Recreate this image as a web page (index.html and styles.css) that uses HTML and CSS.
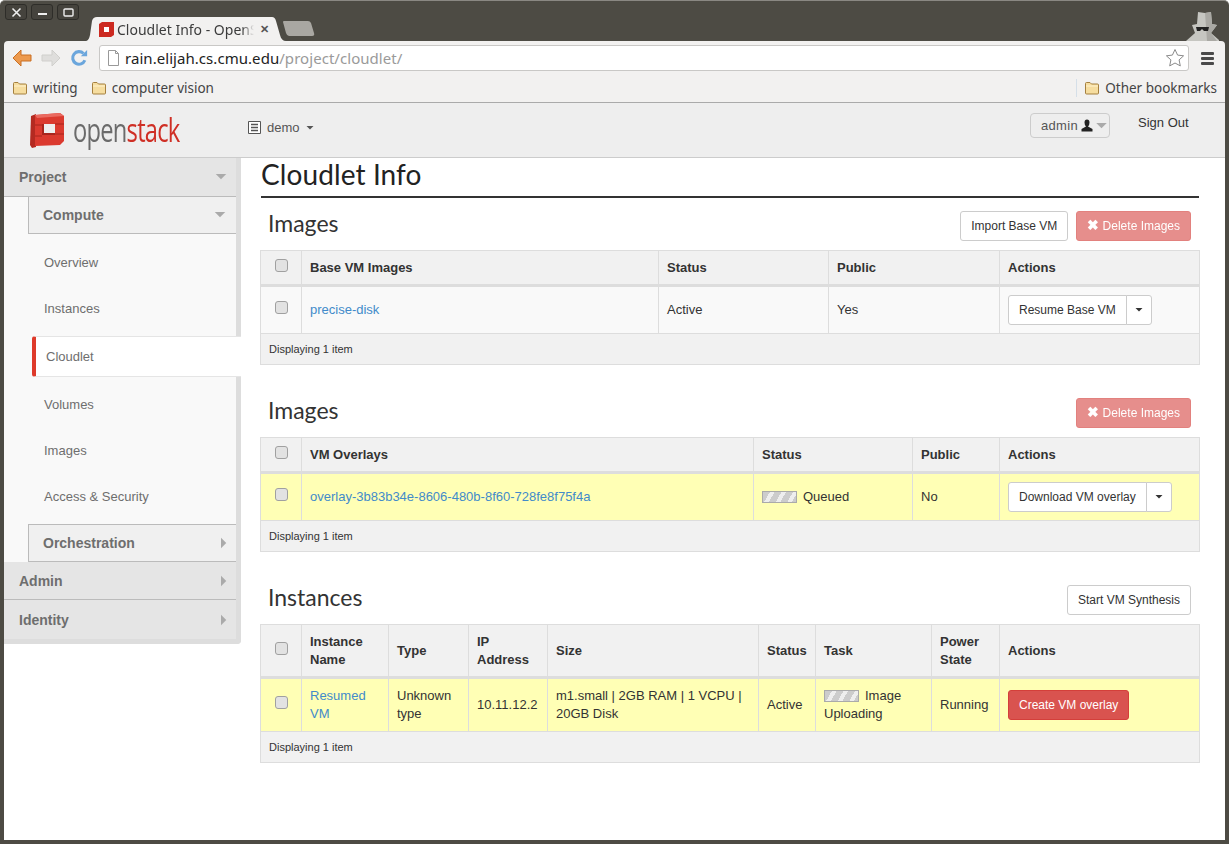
FILE: index.html
```html
<!DOCTYPE html>
<html>
<head>
    <title>Cloudlet Info - OpenStack Dashboard</title>
    <link rel="stylesheet" href="styles.css">
</head>

<body>
<svg class="defs" width="0" height="0">
    <symbol id="folder" viewBox="0 0 16 16">
        <path d="M1.500 13V3.500q0-1 1-1h3.500l1.500 1.500h6q1 0 1 1V13q0 1-1 1h-11q-1 0-1-1z" fill="#f6dd9f" stroke="#a5803f"/>
        <path d="M2 6h12" stroke="#fff3cf"/>
    </symbol>
    <symbol id="caret-down" viewBox="0 0 14 8"><path d="M0 0h14L7 7z"/></symbol>
    <symbol id="caret-right" viewBox="0 0 8 14"><path d="M0 0v14l7-7z"/></symbol>
</svg>

<div class="window">
    <div class="titlebar">
        <div class="win-buttons">
            <span class="win-btn"><svg width="11" height="11" viewBox="0 0 11 11"><path d="M1.500 1.500l8 8M9.500 1.500l-8 8" stroke="#eee" stroke-width="1.600"/></svg></span>
            <span class="win-btn"><svg width="11" height="11" viewBox="0 0 11 11"><path d="M1 7h9" stroke="#eee" stroke-width="2"/></svg></span>
            <span class="win-btn"><svg width="11" height="11" viewBox="0 0 11 11"><rect x="1" y="2" width="9" height="7" rx="1" fill="none" stroke="#eee" stroke-width="1.400"/></svg></span>
        </div>
        <div class="tabs">
            <div class="tab">
                <svg class="tab-shape" width="201" height="24" viewBox="0 0 201 24"><path d="M0 24c3 0 4-2 5-6l2-14q1-4 5-4h175q3 0 4 4l4 14c1 4 3 6 6 6z" fill="#f2f1f0"/></svg>
                <svg class="tab-icon" width="15" height="15" viewBox="0 0 15 15"><path d="M0 2l3-2h12v13l-3 2H0z" fill="#cc2a21"/><rect x="5" y="5" width="5" height="5" fill="#fff"/></svg>
                <span class="tab-title">Cloudlet Info - OpenS</span>
                <span class="tab-close">&#10005;</span>
            </div>
            <svg class="new-tab" width="32" height="15" viewBox="0 0 32 15"><path d="M0 1q0-1 1-1h24q2 0 3 2l3 10q1 3-2 3H6q-2 0-3-3z" fill="#a9a7a2"/></svg>
        </div>
        <svg class="incognito" width="34" height="30" viewBox="0 0 34 30">
            <path d="M7 14l5-1 1-12 7 1 6-1 1 12 5 1-6 8 9 8H1l9-8z" fill="#c6c6c1"/>
            <path d="M20 2l6-1 1 12 5 1-6 8 6 8H22z" fill="#aaa9a4"/>
            <path d="M11 16h13l-1 4h-4l-2-2-2 2h-3z" fill="#222"/>
        </svg>
    </div>

    <div class="toolbar">
        <svg class="nav-icon" width="20" height="18" viewBox="0 0 20 18"><path d="M9 1L1 9l8 8v-5h10V6H9z" fill="#ed9a4e" stroke="#c96f23"/></svg>
        <svg class="nav-icon" width="20" height="18" viewBox="0 0 20 18"><path d="M11 1l8 8-8 8v-5H1V6h10z" fill="#dfdedc" stroke="#d0cfcc"/></svg>
        <svg class="nav-icon" width="18" height="20" viewBox="0 0 20 20"><path d="M16.500 12.500a7 7 0 1 1-1.500-7.500" fill="none" stroke="#6ba6dc" stroke-width="3.400"/><path d="M12 8h7V1z" fill="#6ba6dc"/></svg>
        <div class="urlbar">
            <svg width="13" height="16" viewBox="0 0 13 16"><path d="M1.500.5h7l3 3v12h-10z" fill="#fff" stroke="#999"/><path d="M8.500.5v3h3" fill="none" stroke="#999"/></svg>
            <span class="url-host">rain.elijah.cs.cmu.edu<span class="url-path">/project/cloudlet/</span></span>
            <svg class="star" width="20" height="20" viewBox="0 0 20 20"><path d="M10 1.500l2.600 5.600 6 .7-4.500 4.100 1.200 6L10 15l-5.300 2.900 1.200-6L1.400 7.800l6-.7z" fill="#fff" stroke="#8a8a8a"/></svg>
        </div>
        <div class="menu-icon"><i></i><i></i><i></i></div>
    </div>

    <div class="bookmarks">
        <a class="bookmark"><svg width="16" height="16"><use href="#folder"/></svg>writing</a>
        <a class="bookmark"><svg width="16" height="16"><use href="#folder"/></svg>computer vision</a>
        <a class="bookmark other"><svg width="16" height="16"><use href="#folder"/></svg>Other bookmarks</a>
    </div>

    <div class="topbar">
        <div class="brand">
            <svg width="38" height="36" viewBox="0 0 38 36">
                <path d="M4 4l5-2v33l-4 1-2-3z" fill="#b42a21"/>
                <path d="M8 3l25-2 4 3v25l-4 4-25 1z" fill="#db3a2f"/>
                <path d="M8 3l25-2 4 3-27 2z" fill="#ea6a60"/>
                <rect x="15" y="12" width="13" height="11" fill="#eee"/>
                <path d="M15 12v11h13v-2H17V12z" fill="#a8251d"/>
                <path d="M8 13h7M8 24h7M28 12h9M28 22h9" stroke="#a8251d"/>
            </svg>
            <span class="brand-name">open<b>stack</b></span>
        </div>
        <div class="project-pick">
            <svg width="13" height="13" viewBox="0 0 13 13"><path d="M.5.5h12v12H.5z" fill="#fff" stroke="#555"/><path d="M3 3.500h7M3 6.500h7M3 9.500h7" stroke="#555" stroke-width="1.500"/></svg>
            <span>demo</span>
            <svg class="pick-caret" width="8" height="4"><use href="#caret-down"/></svg>
        </div>
        <div class="user-btn">admin
            <svg width="12" height="13" viewBox="0 0 12 13"><path d="M3.500 3.500a2.500 3 0 0 1 5 0q0 2.500-1.500 4l4.500 2.500v2.500H.5V10L5 7.500q-1.500-1.500-1.500-4z" fill="#222"/></svg>
            <svg class="user-caret" width="11" height="6"><use href="#caret-down"/></svg>
        </div>
        <a class="sign-out">Sign Out</a>
    </div>

    <div class="page">
        <div class="sidebar">
            <div class="nav-head">Project<svg class="arrow" width="12" height="6"><use href="#caret-down"/></svg></div>
            <div class="nav-group">
                <div class="nav-sub">Compute<svg class="arrow" width="12" height="6"><use href="#caret-down"/></svg></div>
                <ul class="nav-list">
                    <li>Overview</li>
                    <li>Instances</li>
                    <li class="active">Cloudlet</li>
                    <li>Volumes</li>
                    <li>Images</li>
                    <li>Access &amp; Security</li>
                </ul>
                <div class="nav-sub closed">Orchestration<svg class="arrow" width="6" height="12"><use href="#caret-right"/></svg></div>
            </div>
            <div class="nav-head closed">Admin<svg class="arrow" width="6" height="12"><use href="#caret-right"/></svg></div>
            <div class="nav-head closed">Identity<svg class="arrow" width="6" height="12"><use href="#caret-right"/></svg></div>
        </div>

        <div class="main">
            <h1 class="page-title">Cloudlet Info</h1>

            <div class="section">
                <div class="section-head">
                    <h2>Images</h2>
                    <div class="section-actions">
                        <a class="btn">Import Base VM</a>
                        <a class="btn btn-danger disabled"><b>&#10006;</b> Delete Images</a>
                    </div>
                </div>
                <table class="data">
                    <colgroup><col class="c-check"><col class="c-w357"><col class="c-w170"><col class="c-w171"><col></colgroup>
                    <thead><tr><th class="check"><span class="checkbox"></span></th><th>Base VM Images</th><th>Status</th><th>Public</th><th>Actions</th></tr></thead>
                    <tbody><tr class="plain">
                        <td class="check"><span class="checkbox"></span></td>
                        <td><a class="link">precise-disk</a></td>
                        <td>Active</td>
                        <td>Yes</td>
                        <td><span class="split"><a class="btn">Resume Base VM</a><a class="btn caret-btn"><svg width="8" height="4"><use href="#caret-down"/></svg></a></span></td>
                    </tr></tbody>
                    <tfoot><tr><td colspan="5">Displaying 1 item</td></tr></tfoot>
                </table>
            </div>

            <div class="section">
                <div class="section-head">
                    <h2>Images</h2>
                    <div class="section-actions">
                        <a class="btn btn-danger disabled"><b>&#10006;</b> Delete Images</a>
                    </div>
                </div>
                <table class="data">
                    <colgroup><col class="c-check"><col class="c-w452"><col class="c-w159"><col class="c-w87"><col></colgroup>
                    <thead><tr><th class="check"><span class="checkbox"></span></th><th>VM Overlays</th><th>Status</th><th>Public</th><th>Actions</th></tr></thead>
                    <tbody><tr class="busy">
                        <td class="check"><span class="checkbox"></span></td>
                        <td><a class="link">overlay-3b83b34e-8606-480b-8f60-728fe8f75f4a</a></td>
                        <td><span class="progress"></span>Queued</td>
                        <td>No</td>
                        <td><span class="split"><a class="btn">Download VM overlay</a><a class="btn caret-btn"><svg width="8" height="4"><use href="#caret-down"/></svg></a></span></td>
                    </tr></tbody>
                    <tfoot><tr><td colspan="5">Displaying 1 item</td></tr></tfoot>
                </table>
            </div>

            <div class="section">
                <div class="section-head">
                    <h2>Instances</h2>
                    <div class="section-actions">
                        <a class="btn">Start VM Synthesis</a>
                    </div>
                </div>
                <table class="data tall">
                    <colgroup><col class="c-check"><col class="c-w87"><col class="c-w80"><col class="c-w79"><col class="c-w211"><col class="c-w57"><col class="c-w116"><col class="c-w68"><col></colgroup>
                    <thead><tr><th class="check"><span class="checkbox"></span></th><th>Instance Name</th><th>Type</th><th>IP Address</th><th>Size</th><th>Status</th><th>Task</th><th>Power State</th><th>Actions</th></tr></thead>
                    <tbody><tr class="busy">
                        <td class="check"><span class="checkbox"></span></td>
                        <td><a class="link">Resumed VM</a></td>
                        <td>Unknown type</td>
                        <td>10.11.12.2</td>
                        <td>m1.small | 2GB RAM | 1 VCPU | 20GB Disk</td>
                        <td>Active</td>
                        <td><span class="progress"></span>Image Uploading</td>
                        <td>Running</td>
                        <td><a class="btn btn-danger">Create VM overlay</a></td>
                    </tr></tbody>
                    <tfoot><tr><td colspan="9">Displaying 1 item</td></tr></tfoot>
                </table>
            </div>
        </div>
    </div>
</div>
</body>
</html>
```

FILE: styles.css
```css
* {
    box-sizing: border-box;
}

html, body {
    margin: 0;
    height: 844px;
    overflow: hidden;
}

body {
    font-family: 'Liberation Sans', Arial, sans-serif;
    font-size: 13px;
    color: #333;
}

.defs {
    display: block;
    height: 0;
}

.window {
    height: 844px;
    display: flex;
    flex-direction: column;
    background-color: #4d4b44;
    padding: 0 4px 4px 4px;
    border-top: 1px solid #8a8883;
    border-radius: 5px 5px 0 0;
}

/* browser chrome */
.titlebar {
    height: 40px;
    flex: none;
    display: flex;
    align-items: flex-start;
    margin: 0 -4px;
    padding-left: 5px;
}

.win-buttons {
    display: flex;
    gap: 4px;
    margin-top: 3px;
}

.win-btn {
    width: 22px;
    height: 16px;
    border: 1px solid #2e2d29;
    border-radius: 3px;
    background-color: #45433d;
    display: flex;
    align-items: center;
    justify-content: center;
}

.tabs {
    display: flex;
    align-items: flex-end;
    height: 40px;
    margin-left: 6px;
}

.tab {
    width: 200px;
    height: 24px;
    position: relative;
    display: flex;
    align-items: center;
    padding: 0 12px 0 14px;
}

.tab-shape {
    position: absolute;
    left: 0;
    top: 0;
}

.tab-icon {
    position: relative;
    flex: none;
}

.tab-title {
    position: relative;
    flex: none;
    font-family: 'Noto Sans', sans-serif;
    font-size: 14px;
    color: #3c3c3c;
    margin-left: 3px;
    width: 137px;
    white-space: nowrap;
    -webkit-mask-image: linear-gradient(to right, #000 125px, transparent 137px);
    mask-image: linear-gradient(to right, #000 125px, transparent 137px);
}

.tab-close {
    position: relative;
    font-size: 11px;
    font-weight: bold;
    color: #555;
    margin-left: 6px;
}

.new-tab {
    margin: 0 0 5px -2px;
}

.incognito {
    margin: 10px 10px 0 auto;
}

.toolbar {
    height: 34px;
    flex: none;
    display: flex;
    align-items: center;
    gap: 9px;
    padding: 0 11px 0 8px;
    background-color: #f2f1f0;
    border-radius: 4px 4px 0 0;
}

.nav-icon {
    flex: none;
}

.urlbar {
    flex: 1;
    height: 26px;
    margin-left: 2px;
    display: flex;
    align-items: center;
    padding: 0 3px 0 7px;
    background-color: #fff;
    border: 1px solid #c9c8c6;
    border-radius: 3px;
    font-family: 'Noto Sans', sans-serif;
    font-size: 15px;
    letter-spacing: .05px;
}

.url-host {
    margin-left: 5px;
    color: #222;
    white-space: nowrap;
}

.url-path {
    color: #9a9a9a;
}

.star {
    margin-left: auto;
}

.menu-icon {
    width: 13px;
    margin-left: 3px;
    display: flex;
    flex-direction: column;
    gap: 2px;
}

.menu-icon i {
    display: block;
    height: 3px;
    border-radius: 1px;
    background-color: #4a4a4a;
}

.bookmarks {
    height: 28px;
    flex: none;
    display: flex;
    align-items: center;
    gap: 13px;
    padding: 0 8px 2px;
    background-color: #f2f1f0;
    border-bottom: 1px solid #aaa;
    font-family: 'Noto Sans', sans-serif;
    font-size: 13.5px;
    color: #444;
}

.bookmark {
    display: flex;
    align-items: center;
    gap: 5px;
}

.bookmark.other {
    margin-left: auto;
    padding-left: 7px;
    border-left: 1px solid #d5dfe8;
}

/* dashboard header */
.topbar {
    height: 55px;
    flex: none;
    display: flex;
    align-items: flex-start;
    background-color: #eee;
    border-bottom: 1px solid #ccc;
}

.brand {
    width: 244px;
    display: flex;
    align-items: center;
    margin-top: 9px;
    padding-left: 23px;
    flex: none;
}

.brand-name {
    display: inline-block;
    width: 106px;
    margin-left: 8px;
    font-family: 'Open Sans', sans-serif;
    font-size: 32px;
    line-height: 36px;
    letter-spacing: -1px;
    color: #6b6b6b;
    white-space: nowrap;
    transform: scaleX(.74);
    transform-origin: left center;
}

.brand-name b {
    font-weight: normal;
    color: #cf2f25;
}

.project-pick {
    display: flex;
    align-items: center;
    gap: 6px;
    margin-top: 17px;
    color: #555;
}

.pick-caret {
    fill: #555;
}

.user-btn {
    margin: 10px 0 0 auto;
    width: 80px;
    height: 25px;
    display: flex;
    align-items: center;
    gap: 3px;
    padding-left: 10px;
    background-color: #eee;
    border: 1px solid #ccc;
    border-radius: 4px;
    color: #555;
    letter-spacing: .3px;
}

.user-caret {
    fill: #aaa;
}

.sign-out {
    width: 115px;
    margin-top: 12px;
    padding-left: 28px;
    color: #333;
}

/* page */
.page {
    flex: 1;
    display: flex;
    align-items: flex-start;
    background-color: #fff;
    min-height: 0;
}

.sidebar {
    width: 237px;
    flex: none;
    border-right: 5px solid #ddd;
    border-bottom: 5px solid #ddd;
    border-bottom-right-radius: 4px;
    background-color: #f9f9f9;
    color: #6e6e6e;
}

.nav-head {
    height: 38px;
    display: flex;
    align-items: center;
    justify-content: space-between;
    padding: 0 9px 0 15px;
    background-color: #e5e5e5;
    border-bottom: 1px solid #bbb;
    font-size: 14px;
    font-weight: bold;
}

.nav-head:first-child {
    height: 39px;
}

.nav-head:last-child {
    height: 39px;
    border-bottom: none;
}

.arrow {
    fill: #aaa;
}

.nav-group {
    padding-left: 24px;
}

.nav-sub {
    height: 37px;
    display: flex;
    align-items: center;
    justify-content: space-between;
    padding: 0 10px 0 14px;
    background-color: #f0f0f0;
    border-left: 1px solid #bbb;
    border-bottom: 1px solid #bbb;
    font-size: 14px;
    font-weight: bold;
}

.nav-sub.closed {
    height: 38px;
    border-top: 1px solid #bbb;
    padding-right: 9px;
}

.nav-list {
    list-style: none;
    margin: 0;
    padding: 6px 0 4px;
}

.nav-list li {
    height: 46px;
    line-height: 46px;
    padding-left: 16px;
}

.nav-list li.active {
    height: 41px;
    line-height: 39px;
    margin: 4px -5px 5px 4px;
    padding-left: 10px;
    background-color: #fff;
    border-top: 1px solid #e5e5e5;
    border-bottom: 1px solid #e5e5e5;
    border-left: 4px solid #de3a2b;
    border-radius: 3px 0 0 3px;
}

.main {
    flex: 1;
    padding: 0 25px 0 19px;
}

.page-title {
    margin: 0 1px 13px 1px;
    height: 40px;
    font-family: Lato, sans-serif;
    font-size: 28px;
    font-weight: normal;
    line-height: 32px;
    letter-spacing: .1px;
    color: #222;
    border-bottom: 2px solid #333;
}

.section {
    margin-bottom: 33px;
}

.section-head {
    display: flex;
    align-items: center;
    justify-content: space-between;
    height: 30px;
    padding: 0 9px 0 8px;
    margin-bottom: 9px;
}

.section-head h2 {
    margin: -7px 0 0;
    font-family: Lato, sans-serif;
    font-size: 23px;
    font-weight: normal;
    color: #333;
}

.section-actions {
    display: flex;
    gap: 8px;
}

.btn {
    display: inline-block;
    height: 30px;
    padding: 0 10px;
    line-height: 28px;
    font-size: 12px;
    color: #333;
    background-color: #fff;
    border: 1px solid #ccc;
    border-radius: 3px;
    white-space: nowrap;
}

.btn b {
    font-size: 14px;
    line-height: 14px;
}

.btn-danger {
    color: #fff;
    background-color: #d9534f;
    border-color: #d43f3a;
}

.btn-danger.disabled {
    opacity: .65;
}

.split {
    display: inline-flex;
}

.split .btn:first-child {
    border-radius: 3px 0 0 3px;
}

.caret-btn {
    width: 26px;
    margin-left: -1px;
    padding: 0;
    display: inline-flex;
    align-items: center;
    justify-content: center;
    border-radius: 0 3px 3px 0;
    fill: #333;
}

/* tables */
.data {
    width: 940px;
    table-layout: fixed;
    border-collapse: collapse;
    border: 1px solid #ddd;
}

.data th, .data td {
    padding: 7px 8px;
    border: 1px solid #ddd;
    text-align: left;
    line-height: 18px;
    vertical-align: middle;
}

.data thead th {
    height: 35px;
    background-color: #f1f1f1;
    border-bottom: 3px solid #ddd;
}

.data.tall thead th {
    height: 53px;
}

.data tbody td {
    height: 48px;
}

.data.tall tbody td {
    height: 54px;
}

.data tfoot td {
    height: 31px;
    padding: 0 8px;
    font-size: 11px;
    background-color: #f1f1f1;
}

.plain td {
    background-color: #f9f9f9;
}

.busy td {
    background-color: #ffffb5;
}

.data .check {
    text-align: center;
    padding: 0;
}

.checkbox {
    display: inline-block;
    width: 13px;
    height: 13px;
    margin-bottom: 5px;
    vertical-align: middle;
    background-color: #e2e2e2;
    border: 1px solid #a0a0a0;
    border-radius: 3px;
}

.link {
    color: #428bca;
}

.progress {
    display: inline-block;
    width: 35px;
    height: 12px;
    margin-right: 6px;
    vertical-align: -2px;
    border: 1px solid #aaa;
    background: repeating-linear-gradient(120deg, #ccc 0, #ccc 6px, #eee 6px, #eee 10px);
}

.c-check { width: 41px; }
.c-w357 { width: 357px; }
.c-w170 { width: 170px; }
.c-w171 { width: 171px; }
.c-w452 { width: 452px; }
.c-w159 { width: 159px; }
.c-w87 { width: 87px; }
.c-w80 { width: 80px; }
.c-w79 { width: 79px; }
.c-w211 { width: 211px; }
.c-w57 { width: 57px; }
.c-w116 { width: 116px; }
.c-w68 { width: 68px; }
```
